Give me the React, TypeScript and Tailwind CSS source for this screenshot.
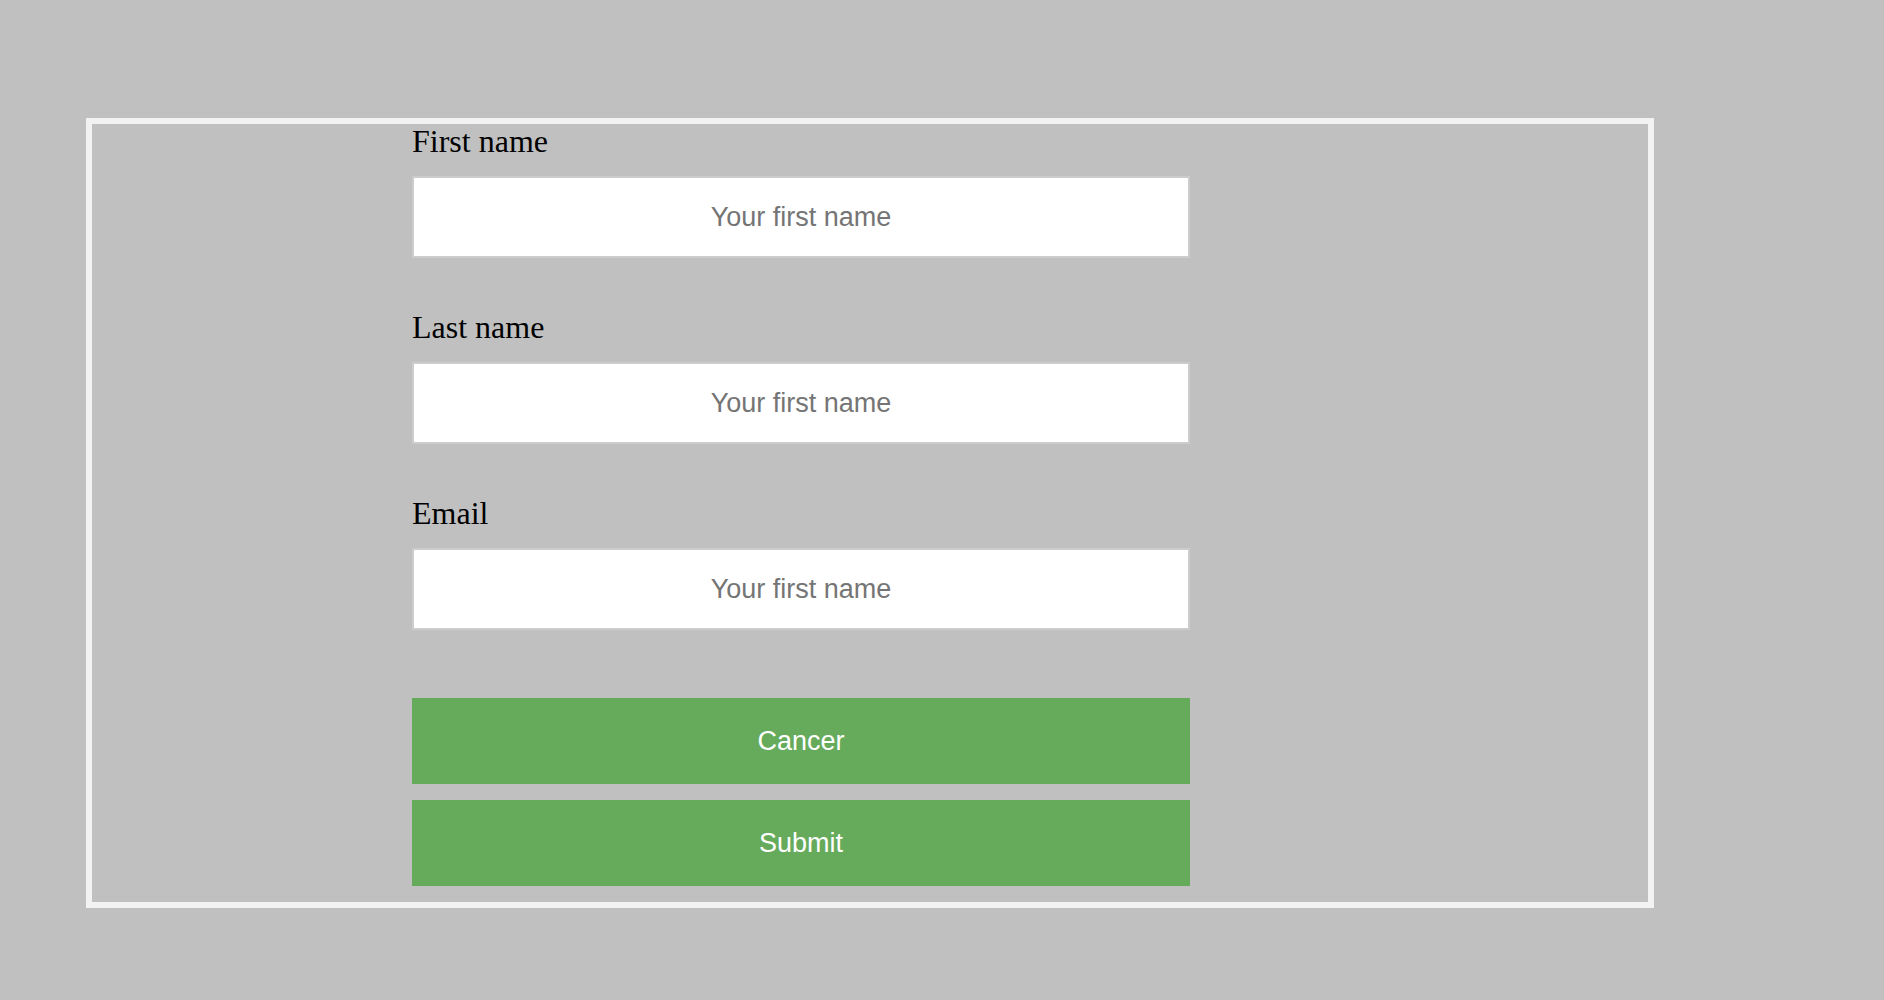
export default function App() {
  const fields = ["First name", "Last name", "Email"];

  return (
    <div className="min-h-screen bg-[#c0c0c0] pt-[118px] pl-[86px]">
      <div className="w-[1568px] h-[790px] border-[6px] border-[#f2f2f2]">
        <form
          className="ml-[320px] w-[778px] pt-[1px]"
          onSubmit={(e) => e.preventDefault()}
        >
          {fields.map((label, i) => (
            <div key={label} className={i === 0 ? "" : "mt-[53px]"}>
              <label className="block text-[32px] leading-[32px] text-black font-['Liberation_Serif',serif]">
                {label}
              </label>
              <input
                type="text"
                placeholder="Your first name"
                className="mt-[19px] block w-full h-[82px] bg-white border-2 border-[#cccccc] text-center text-[27px] font-['Liberation_Sans',Arial,sans-serif] text-black placeholder:text-[#757575] outline-none"
              />
            </div>
          ))}

          <button
            type="button"
            className="mt-[68px] flex w-full h-[86px] items-center justify-center bg-[#66ab5c] text-white text-[27px] font-['Liberation_Sans',Arial,sans-serif]"
          >
            Cancer
          </button>
          <button
            type="submit"
            className="mt-[16px] flex w-full h-[86px] items-center justify-center bg-[#66ab5c] text-white text-[27px] font-['Liberation_Sans',Arial,sans-serif]"
          >
            Submit
          </button>
        </form>
      </div>
    </div>
  );
}
